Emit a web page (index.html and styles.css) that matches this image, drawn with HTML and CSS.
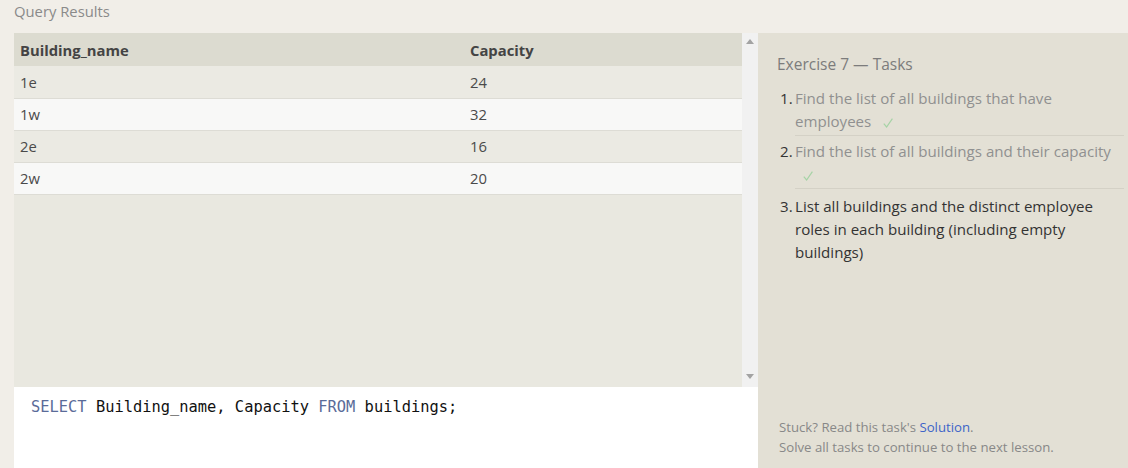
FILE: index.html
```html
<!DOCTYPE html>
<html>
<head>
<meta charset="utf-8">
<link rel="stylesheet" href="styles.css">
</head>
<body>
<div class="topbar">Query Results</div>
<div class="main">
  <div class="left">
    <div class="results">
      <div class="table-wrap">
        <table class="grid">
          <thead>
            <tr><th class="c1">Building_name</th><th>Capacity</th></tr>
          </thead>
          <tbody>
            <tr class="odd"><td>1e</td><td>24</td></tr>
            <tr class="even"><td>1w</td><td>32</td></tr>
            <tr class="odd"><td>2e</td><td>16</td></tr>
            <tr class="even"><td>2w</td><td>20</td></tr>
          </tbody>
        </table>
      </div>
      <div class="scrollbar">
        <svg class="arrow" width="8" height="5" viewBox="0 0 8 5"><path d="M0 5 L4 0 L8 5 Z" fill="#a3a3a3"/></svg>
        <svg class="arrow" width="8" height="5" viewBox="0 0 8 5"><path d="M0 0 L4 5 L8 0 Z" fill="#a3a3a3"/></svg>
      </div>
    </div>
    <div class="editor"><span class="kw">SELECT</span> Building_name, Capacity <span class="kw">FROM</span> buildings;</div>
  </div>
  <div class="panel">
    <div class="panel-body">
      <h2 class="title">Exercise 7 — Tasks</h2>
      <ol class="tasks">
        <li class="done"><span class="txt">Find the list of all buildings that have employees <svg class="check" width="10" height="10" viewBox="0 0 10 10"><path d="M0.8 5.6 L3.6 9 L9.4 0.6" fill="none" stroke="#a6d3a6" stroke-width="1.2"/></svg></span></li>
        <li class="done"><span class="txt">Find the list of all buildings and their capacity <svg class="check" width="10" height="10" viewBox="0 0 10 10"><path d="M0.8 5.6 L3.6 9 L9.4 0.6" fill="none" stroke="#a6d3a6" stroke-width="1.2"/></svg></span></li>
        <li class="current"><span class="txt">List all buildings and the distinct employee roles in each building (including empty buildings)</span></li>
      </ol>
    </div>
    <div class="footer">
      <div>Stuck? Read this task's <span class="link">Solution</span>.</div>
      <div>Solve all tasks to continue to the next lesson.</div>
    </div>
  </div>
</div>
</body>
</html>
```

FILE: styles.css
```css
* { box-sizing: border-box; }
html, body { margin: 0; padding: 0; }
body {
  width: 1128px;
  height: 468px;
  overflow: hidden;
  background: #f1eee8;
  font-family: "Open Sans", "Noto Sans", sans-serif;
  color: #444;
}
.topbar {
  height: 33px;
  padding: 1px 0 0 14px;
  font-size: 14.8px;
  line-height: 20px;
  color: #8a8a8a;
}
.main {
  display: flex;
  height: 435px;
}
.left {
  margin-left: 14px;
  width: 744px;
  display: flex;
  flex-direction: column;
}
.results {
  height: 354px;
  display: flex;
  background: #e9e8e0;
}
.table-wrap {
  flex: 1;
}
.grid {
  width: 100%;
  border-collapse: collapse;
  font-size: 14.8px;
}
.grid th {
  background: #dcdbd0;
  height: 33px;
  text-align: left;
  font-weight: 700;
  color: #444;
  padding: 0 6px;
}
.grid th.c1 { width: 450px; }
.grid td {
  height: 32px;
  padding: 0 6px;
  color: #4a4a4a;
  border-bottom: 1px solid #dddcd5;
}
.grid tr.odd td { background: #ebeae3; }
.grid tr.even td { background: #f8f8f7; }
.scrollbar {
  width: 16px;
  background: #f1f1f1;
  display: flex;
  flex-direction: column;
  justify-content: space-between;
  align-items: center;
  padding: 6px 0 8px;
}
.arrow { display: block; }
.editor {
  flex: 1;
  background: #fff;
  padding: 9px 17px;
  font-family: "DejaVu Sans Mono", monospace;
  font-size: 15.4px;
  line-height: 23px;
  color: #111;
  white-space: pre;
}
.kw { color: #5a6b99; }
.panel {
  flex: 1;
  background: #e3e0d5;
  display: flex;
  flex-direction: column;
  justify-content: space-between;
  padding: 0 4px 11px 19px;
}
.title {
  margin: 19px 0 7px;
  font-size: 15.5px;
  font-weight: 400;
  line-height: 24px;
  color: #7c7c7c;
}
.tasks {
  margin: 0;
  padding: 0 0 0 3px;
  list-style: none;
  counter-reset: task;
  font-size: 15.1px;
  line-height: 23px;
}
.tasks li {
  display: flex;
  counter-increment: task;
  padding-top: 4px;
  color: #333;
}
.tasks li.current { padding-top: 6px; }
.tasks li::before {
  content: counter(task) ".";
  flex: 0 0 15px;
  color: #333;
}
.tasks li .txt {
  flex: 1;
  border-bottom: 1px solid #d4d1c6;
  padding-bottom: 2px;
}
.tasks li:last-child .txt { border-bottom: none; }
.tasks li.done .txt { color: #909090; }
.check {
  margin-left: 8px;
  vertical-align: -1px;
}
.footer {
  padding-left: 2px;
  font-size: 13.2px;
  line-height: 20px;
  color: #888;
}
.link { color: #3d64c8; }
```
